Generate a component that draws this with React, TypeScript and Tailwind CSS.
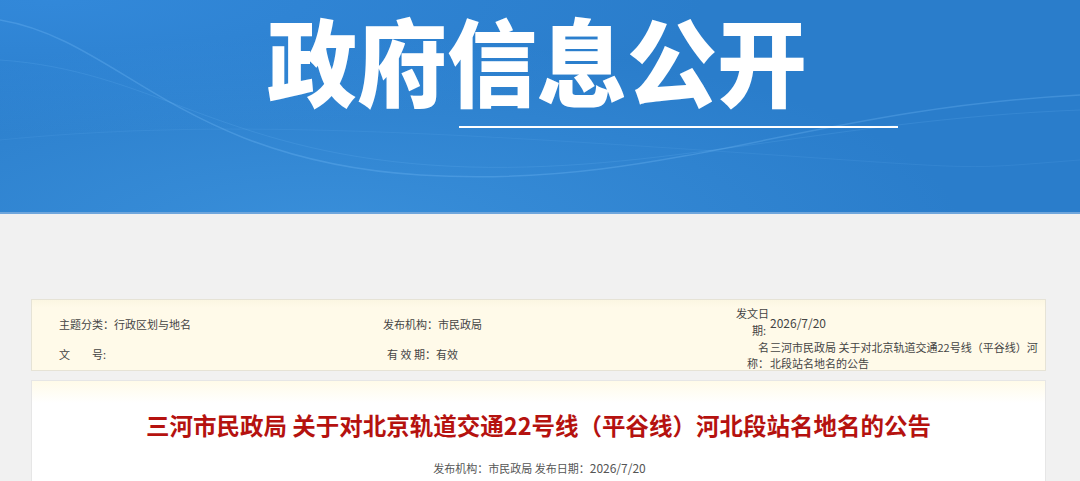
import React from 'react';

const cjk = "font-['Microsoft_YaHei','Noto_Sans_CJK_SC',sans-serif]";

const MetaBox: React.FC = () => (
  <div className={`ml-[31px] w-[1015px] h-[72px] border border-[#e6e3d6] bg-[linear-gradient(to_bottom,#fbf6e2_0px,#fffae9_8px)] text-[11px] text-[#444] ${cjk}`}>
    <div className="grid grid-cols-[324px_348px_1fr] h-full pl-[27px]">
      {/* column 1 */}
      <div className="flex flex-col justify-center gap-[17px] pt-[7px]">
        <div className="h-[13px] leading-[13px]">主题分类：行政区划与地名</div>
        <div className="h-[13px] leading-[13px] flex">
          <span className="w-[33px]">文</span>
          <span>号:</span>
        </div>
      </div>
      {/* column 2 */}
      <div className="flex flex-col justify-center gap-[17px] pt-[7px]">
        <div className="h-[13px] leading-[13px]">发布机构：市民政局</div>
        <div className="h-[13px] leading-[13px] pl-[4px]">有 效 期：有效</div>
      </div>
      {/* column 3 */}
      <div className="flex flex-col pt-[5px]">
        <div className="flex items-center">
          <div className="w-[38px] text-right leading-[17px]">
            <div>发文日</div>
            <div className="pr-[3px]">期:</div>
          </div>
          <div className="text-[12px] pl-[1px] pt-[1px]">2026/7/20</div>
        </div>
        <div className="grid grid-cols-[38px_1fr] leading-[16px]">
          <div className="text-right">名</div>
          <div className="pl-[1px]">三河市民政局 关于对北京轨道交通22号线（平谷线）河</div>
          <div className="text-right">称：</div>
          <div className="pl-[1px]">北段站名地名的公告</div>
        </div>
      </div>
    </div>
  </div>
);

const App: React.FC = () => {
  return (
    <div className="w-[1080px] h-[481px] overflow-hidden bg-[#f1f1f1]">
      {/* banner */}
      <div className="relative h-[214px] overflow-hidden border-b-2 border-[#6fa6dc] bg-[#2a7dcb]">
        <div className="absolute inset-0 bg-[radial-gradient(ellipse_at_30%_110%,rgba(80,170,240,0.4),transparent_60%)]" />
        <div className="absolute inset-0 bg-[radial-gradient(ellipse_at_5%_0%,rgba(60,150,235,0.45),transparent_45%)]" />
        <svg className="absolute inset-0" width="1080" height="214" viewBox="0 0 1080 214">
          <path d="M0 20 C 120 40, 180 160, 420 175 S 800 110, 1080 95" fill="none" stroke="rgba(130,200,255,0.25)" strokeWidth="1.5" />
          <path d="M0 60 C 150 70, 220 150, 430 165 S 820 120, 1080 110" fill="none" stroke="rgba(130,200,255,0.14)" strokeWidth="1" />
          <path d="M0 140 C 200 120, 400 130, 700 150 S 950 170, 1080 160" fill="none" stroke="rgba(130,200,255,0.1)" strokeWidth="1" />
        </svg>
        <div className="relative flex flex-col">
          <h1 className={`self-center mt-[4px] ml-[-6px] text-[90px] leading-[110px] font-black text-white tracking-[0px] scale-y-[1.06] ${cjk}`}>
            政府信息公开
          </h1>
          <div className="ml-[459px] mt-[12px] w-[439px] h-[2px] bg-white" />
        </div>
      </div>

      <div className="h-[85px]" />
      <MetaBox />

      {/* article */}
      <div className={`mt-[9px] ml-[31px] w-[1015px] h-[120px] border border-[#e6e6e6] bg-[linear-gradient(to_bottom,#fffbe9_0px,#ffffff_22px)] ${cjk}`}>
        <h2 className="pt-[28px] text-center text-[23.5px] leading-[32px] font-bold text-[#b5120f]">
          三河市民政局 关于对北京轨道交通22号线（平谷线）河北段站名地名的公告
        </h2>
        <div className="mt-[18px] text-center text-[11px] text-[#555] pl-[2px]">
          发布机构：市民政局 发布日期：<span className="text-[12px]">2026/7/20</span>
        </div>
      </div>
    </div>
  );
};

export default App;
